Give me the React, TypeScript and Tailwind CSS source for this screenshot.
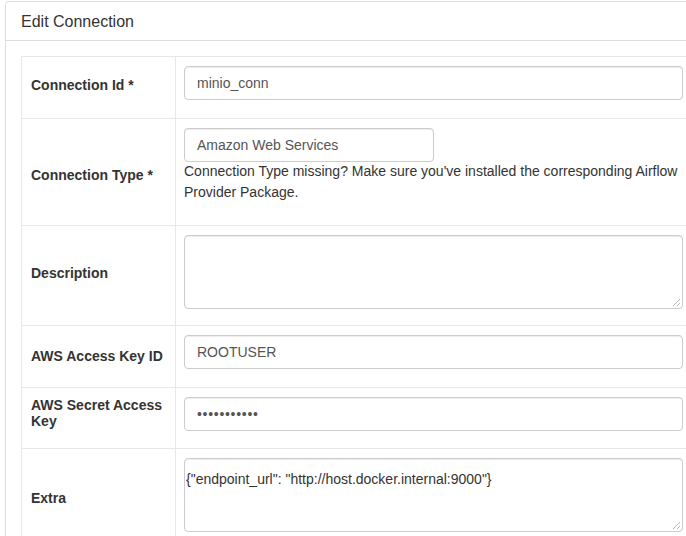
import React from 'react'

const Grip = () => (
  <svg className="absolute right-[1px] bottom-[1px]" width="9" height="9" viewBox="0 0 9 9">
    <path d="M8 1 L1 8 M8 5 L5 8" stroke="#bbb" strokeWidth="1" />
  </svg>
)

const Row = ({
  label,
  h,
  shift = 'mb-[5px]',
  children,
}: {
  label: React.ReactNode
  h: string
  shift?: string
  children: React.ReactNode
}) => (
  <div className={`flex border-t border-[#e8e8e8] ${h}`}>
    <div className="w-[154px] shrink-0 border-r border-[#e8e8e8] flex items-center px-[9px] font-bold text-[14px] leading-[16px] text-[#333]">
      <span className={shift}>{label}</span>
    </div>
    <div className="flex-1 pt-[9px] px-[8px]">{children}</div>
  </div>
)

const inputCls =
  'h-[34px] border border-[#ccc] rounded-[4px] shadow-[inset_0_1px_1px_rgba(0,0,0,0.075)] px-[12px] flex items-center text-[14px] text-[#555] bg-white'

export default function App() {
  return (
    <div className="w-[686px] h-[536px] overflow-hidden bg-white pl-[5px] pt-[1px] font-['Liberation_Sans',Arial,sans-serif] text-[#333]">
      <div className="w-[703px] border border-[#ddd] rounded-[4px]">
        {/* Header */}
        <div className="h-[39px] px-[15px] pt-[2px] flex items-center text-[16px] border-b border-[#ddd]">Edit Connection</div>

        {/* Body */}
        <div className="p-[15px]">
          <div className="w-[671px] border-l border-r border-b border-[#e8e8e8]">
            <Row label="Connection Id *" h="h-[62px]">
              <div className={inputCls}>minio_conn</div>
            </Row>
            <Row label="Connection Type *" h="h-[107px]" shift="mt-[5px]">
              <div className={`${inputCls} w-[250px]`}>Amazon Web Services</div>
              <p className="text-[14px] leading-[21px] text-[#333] -mt-[1px]">
                Connection Type missing? Make sure you've installed the corresponding Airflow Provider Package.
              </p>
            </Row>
            <Row label="Description" h="h-[100px]">
              <div className="relative h-[74px] border border-[#ccc] rounded-[4px] shadow-[inset_0_1px_1px_rgba(0,0,0,0.075)] bg-white">
                <Grip />
              </div>
            </Row>
            <Row label="AWS Access Key ID" h="h-[62px]" shift="mb-[1px]">
              <div className={inputCls}>ROOTUSER</div>
            </Row>
            <Row label={<span>AWS Secret Access<br />Key</span>} h="h-[61px]" shift="mb-[11px]">
              <div className={`${inputCls} h-[33px] text-[#333] text-[10px] tracking-[0.7px]`}>•••••••••••</div>
            </Row>
            <Row label="Extra" h="h-[100px]" shift="mb-[1px]">
              <div className="relative h-[74px] border border-[#ccc] rounded-[4px] shadow-[inset_0_1px_1px_rgba(0,0,0,0.075)] bg-white px-[1px] pt-[10px] text-[14px] leading-[20px] text-[#333]">
                {'{"endpoint_url": "http://host.docker.internal:9000"}'}
                <Grip />
              </div>
            </Row>
          </div>
        </div>
      </div>
    </div>
  )
}
